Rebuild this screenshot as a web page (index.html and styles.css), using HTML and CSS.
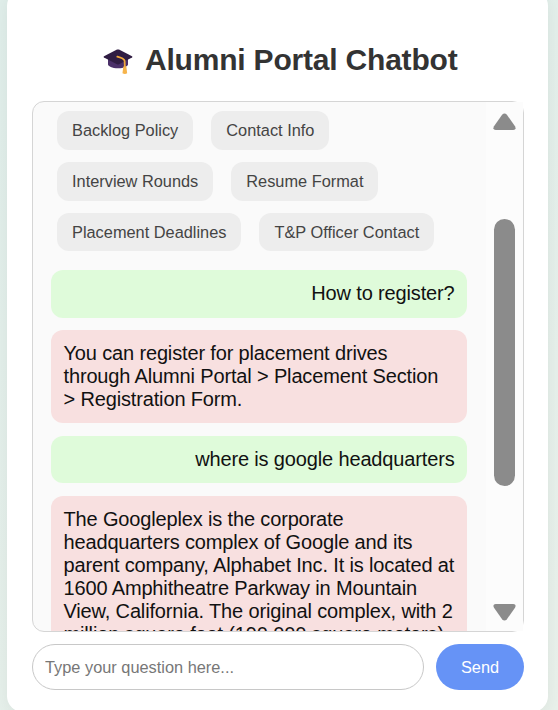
FILE: index.html
```html
<!DOCTYPE html>
<html lang="en">
<head>
<meta charset="utf-8">
<title>Alumni Portal Chatbot</title>
<link rel="stylesheet" href="styles.css">
</head>
<body>
<main class="card">
  <h1 class="title">
    <svg class="cap" width="30" height="27" viewBox="0 0 30 27" aria-hidden="true">
      <path d="M5 10V16.5C5 18 9 20.3 15 20.3S25 18 25 16.5V10Z" fill="#4b3069"/>
      <path d="M1 8.2 14 1.6Q15 1.2 16 1.6L29 8.2Q30 8.9 29 9.6L16 16.3Q15 16.8 14 16.3L1 9.6Q0 8.9 1 8.2Z" fill="#301d43"/>
      <path d="M14.3 8.6Q20.7 10.2 21.6 12.6L21.9 20" fill="none" stroke="#f2a83b" stroke-width="1.8" stroke-linecap="round"/>
      <path d="M20.3 18.5h3l.9 6.7q-2.3 1.5-4.7 0Z" fill="#f6b44b"/>
    </svg>
    <span>Alumni Portal Chatbot</span>
  </h1>
  <section class="chat">
    <div class="feed">
      <div class="chips">
        <div class="chip-row"><button class="chip">Backlog Policy</button><button class="chip">Contact Info</button></div>
        <div class="chip-row"><button class="chip">Interview Rounds</button><button class="chip">Resume Format</button></div>
        <div class="chip-row"><button class="chip">Placement Deadlines</button><button class="chip">T&amp;P Officer Contact</button></div>
      </div>
      <p class="message user">How to register?</p>
      <p class="message bot">You can register for placement drives<br>through Alumni Portal &gt; Placement Section<br>&gt; Registration Form.</p>
      <p class="message user">where is google headquarters</p>
      <p class="message bot">The Googleplex is the corporate<br>headquarters complex of Google and its<br>parent company, Alphabet Inc. It is located at<br>1600 Amphitheatre Parkway in Mountain<br>View, California. The original complex, with 2<br>million square feet (190,000 square meters)</p>
    </div>
    <div class="scrollbar">
      <svg width="23" height="18" viewBox="0 0 23 18"><path d="M9.1 1.8Q11.5-.7 13.9 1.8L22 13.2Q23.7 17 20.3 17H2.7Q-.7 17 1 13.2Z" fill="#8b8b8b"/></svg>
      <div class="track"><div class="thumb"></div></div>
      <svg width="23" height="18" viewBox="0 0 23 18"><path d="M9.1 16.2Q11.5 18.7 13.9 16.2L22 4.8Q23.7 1 20.3 1H2.7Q-.7 1 1 4.8Z" fill="#8b8b8b"/></svg>
    </div>
  </section>
  <form class="composer">
    <input class="question" type="text" placeholder="Type your question here..." aria-label="Question">
    <button class="send" type="button">Send</button>
  </form>
</main>
</body>
</html>
```
FILE: styles.css
```css
* { box-sizing: border-box; }
body {
  margin: 0;
  height: 710px;
  overflow: hidden;
  padding: 0 10px 0 7px;
  background: linear-gradient(150deg, #e0eeea, #e9f1eb);
  font-family: "Liberation Sans", Arial, sans-serif;
}
.card {
  height: 722px;
  margin-top: -10px;
  padding: 50px 24px 0 25px;
  background: #fff;
  border-radius: 16px;
  box-shadow: 0 4px 18px rgba(0, 0, 0, .06);
}
.title {
  display: flex;
  align-items: center;
  gap: 12px;
  height: 40px;
  margin: 0 0 21px;
  padding-left: 71px;
  color: #333;
  font-size: 30px;
  letter-spacing: -.2px;
  line-height: 40px;
  white-space: nowrap;
}
.cap { flex: none; margin-top: 2px; }
.chat {
  display: flex;
  height: 531px;
  background: #fafafa;
  border: 1px solid #d5d5d5;
  border-radius: 12px;
}
.feed {
  flex: 1;
  min-width: 0;
  overflow: hidden;
  padding: 9px 19px 0 18px;
  border-radius: 11px 0 0 11px;
}
.chips {
  display: grid;
  gap: 12px;
  margin: 0 0 19px 6px;
}
.chip-row { display: flex; gap: 18px; }
.chip {
  height: 39px;
  padding: 0 15px;
  border: 0;
  border-radius: 12px;
  background: #ededed;
  color: #444;
  font: 16.35px/39px "Liberation Sans", Arial, sans-serif;
  white-space: nowrap;
}
.chip-row:last-child .chip { height: 38px; line-height: 38px; }
.message {
  margin: 0 0 12.5px;
  padding: 12px 12.5px;
  border-radius: 12px;
  color: #111;
  font-size: 20px;
  letter-spacing: -.15px;
  line-height: 23px;
  white-space: nowrap;
}
.user { height: 47.6px; background: #dffbda; text-align: right; }
.bot { background: #f8e0e0; }
.scrollbar {
  flex: none;
  display: flex;
  flex-direction: column;
  align-items: center;
  width: 37px;
  padding: 11px 0 10px;
  background: #fcfcfc;
}
.scrollbar svg { flex: none; }
.track { flex: 1; padding-top: 88px; }
.thumb {
  width: 21px;
  height: 267px;
  border-radius: 11px;
  background: #8b8b8b;
}
.composer { display: flex; gap: 12px; margin-top: 12px; }
.question {
  flex: 1;
  min-width: 0;
  height: 46px;
  padding: 0 12px;
  border: 1px solid #c8c8c8;
  border-radius: 23px;
  font: 16.35px "Liberation Sans", Arial, sans-serif;
}
.question::placeholder { color: #777; }
.send {
  width: 88px;
  height: 46px;
  border: 0;
  border-radius: 23px;
  background: #6693f6;
  color: #fff;
  font: 16.35px "Liberation Sans", Arial, sans-serif;
}
```
